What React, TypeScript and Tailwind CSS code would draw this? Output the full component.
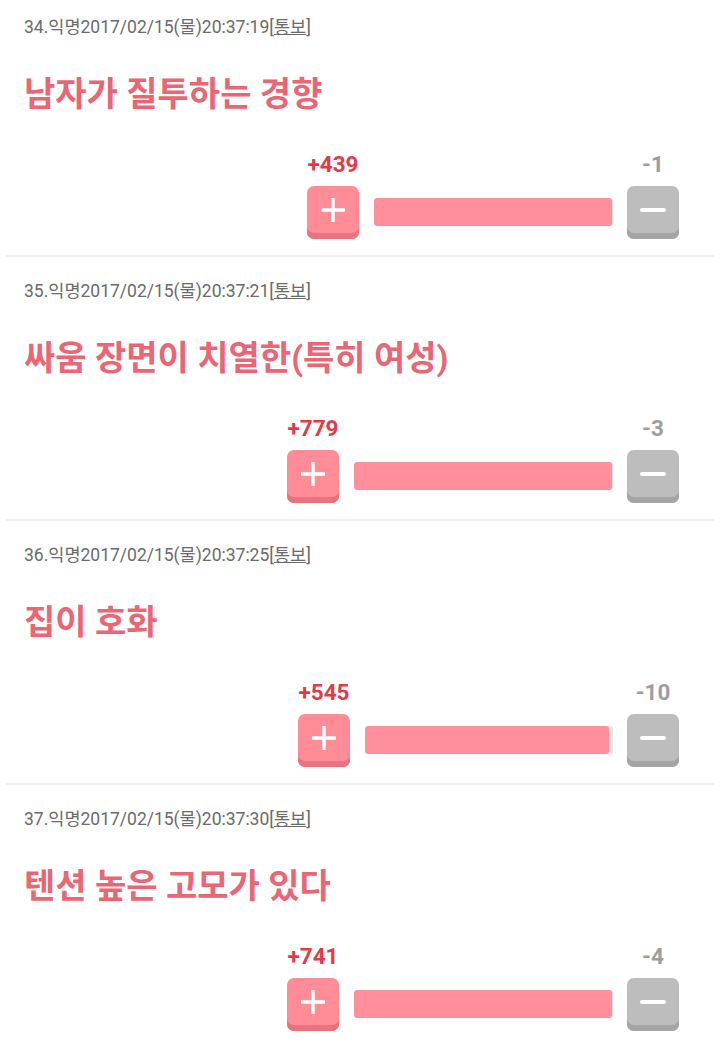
import React from "react";

interface Post {
  no: number;
  time: string;
  title: string;
  up: number;
  down: number;
  barWidth: number;
}

const posts: Post[] = [
  { no: 34, time: "20:37:19", title: "남자가 질투하는 경향", up: 439, down: 1, barWidth: 239 },
  { no: 35, time: "20:37:21", title: "싸움 장면이 치열한(특히 여성)", up: 779, down: 3, barWidth: 259 },
  { no: 36, time: "20:37:25", title: "집이 호화", up: 545, down: 10, barWidth: 248 },
  { no: 37, time: "20:37:30", title: "텐션 높은 고모가 있다", up: 741, down: 4, barWidth: 259 },
];

const FONT = "font-['Roboto','Noto_Sans_CJK_KR',sans-serif]";

function PlusButton() {
  return (
    <button className="w-[52px] h-[53px] rounded-[7px] bg-[#ff8c97] shadow-[inset_0_-6px_0_#e7737f] flex items-center justify-center pb-[6px]">
      <svg width="24" height="24" viewBox="0 0 24 24">
        <path d="M12 1v22M1 12h22" stroke="#fff" strokeWidth="3.4" strokeLinecap="round" />
      </svg>
    </button>
  );
}

function MinusButton() {
  return (
    <button className="w-[52px] h-[53px] rounded-[7px] bg-[#bdbdbd] shadow-[inset_0_-6px_0_#a5a5a5] flex items-center justify-center pb-[6px]">
      <svg width="26" height="6" viewBox="0 0 26 6">
        <path d="M2 3h22" stroke="#fff" strokeWidth="4" strokeLinecap="round" />
      </svg>
    </button>
  );
}

function VoteRow({ post }: { post: Post }) {
  const ratio = post.up / (post.up + post.down);
  return (
    <div className="flex justify-end items-end pr-[35px] mt-[38px]">
      <div className="flex flex-col items-center w-[52px]">
        <span className="text-[22.5px] leading-[24px] font-bold text-[#e23a48] whitespace-nowrap">
          +{post.up}
        </span>
        <div className="mt-[10px]">
          <PlusButton />
        </div>
      </div>
      <div
        className="ml-[15px] mr-[14px] mb-[13px] h-[28px] rounded-[3px] bg-[#e6e6e6] overflow-hidden"
        style={{ width: post.barWidth }}
      >
        <div className="h-full bg-[#ff8f9b] rounded-[3px]" style={{ width: `${ratio * 100}%` }} />
      </div>
      <div className="flex flex-col items-center w-[52px]">
        <span className="text-[22.5px] leading-[24px] font-bold text-[#9e9e9e] whitespace-nowrap">
          -{post.down}
        </span>
        <div className="mt-[10px]">
          <MinusButton />
        </div>
      </div>
    </div>
  );
}

export default function App() {
  return (
    <div className={`bg-white min-h-[1047px] px-[6px] ${FONT}`}>
      {posts.map((post, i) => (
        <div
          key={post.no}
          className={`h-[257px] border-b-2 border-[#f0f0f0] pt-[15px] ${i > 0 ? "mt-[7px]" : ""}`}
        >
          <div className="pl-[18px] text-[17.5px] leading-[24px] text-[#6b6b6b] whitespace-nowrap">
            {post.no}.익명2017/02/15(물){post.time}[<span className="underline">통보</span>]
          </div>
          <h2 className="pl-[18px] mt-[35px] text-[34px] leading-[40px] font-bold text-[#eb6674] whitespace-nowrap">
            {post.title}
          </h2>
          <VoteRow post={post} />
        </div>
      ))}
    </div>
  );
}
